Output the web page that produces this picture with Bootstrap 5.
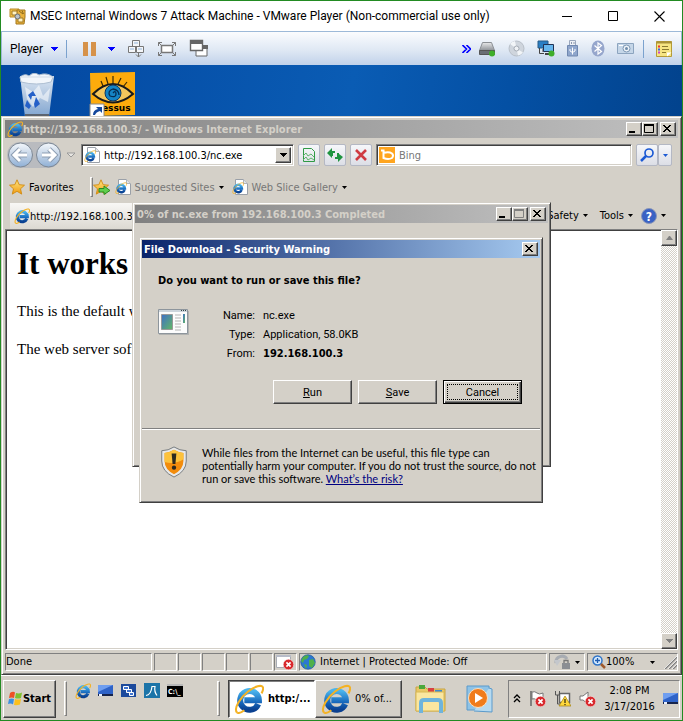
<!DOCTYPE html>
<html lang="en">
<head>
<meta charset="utf-8">
<meta name="viewport" content="width=device-width, initial-scale=1">
<title>MSEC Internal Windows 7 Attack Machine - VMware Player</title>
<link href="https://cdn.jsdelivr.net/npm/bootstrap@5.3.0/dist/css/bootstrap.min.css" rel="stylesheet">
<style>
:root{--face:#d4d0c8;--ui:"DejaVu Sans Condensed","DejaVu Sans",sans-serif;--host:Roboto,"Open Sans",sans-serif}
body{font:11px/13px var(--ui);color:#000;background:#fff}
svg{display:block;flex:none}
button,input{font:inherit;color:inherit;padding:0;border:0;background:none;border-radius:0}
.vm{border:1px solid #228b22}
.vm-title{height:30px;font:12px/16px var(--host)}
.vm-title .cap{width:46px;height:28px}
.vm-bar{height:34px;font:12px/16px var(--host);border:1px solid #9db9d8;border-bottom:0;background:linear-gradient(#fbfcfe,#dfe8f4 55%,#c1d2ea)}
.vm-sep{width:1px;height:18px;background:#7ba2ce}
.gap12{gap:12px}
.gap6{gap:6px}
.desk{background:linear-gradient(100deg,#0347a0,#0a5cb4 45%,#0450a4 65%,#013b80);min-height:0}
.shelf{height:51px;overflow:hidden}
.raised{background:var(--face);border:1px solid;border-color:#d4d0c8 #404040 #404040 #d4d0c8;box-shadow:inset 1px 1px #fff,inset -1px -1px #808080}
.btn3d{background:var(--face);border:1px solid;border-color:#fff #404040 #404040 #fff;box-shadow:inset -1px -1px #808080}
.sunk{background:#fff;border:1px solid;border-color:#808080 #fff #fff #808080;box-shadow:inset 1px 1px #404040,inset -1px -1px #d4d0c8}
.ttl{height:18px;padding:0 2px;color:#d4d0c8;font-weight:bold;background:linear-gradient(90deg,#808080,#c0c0c0);white-space:nowrap}
.ttl.live{color:#fff;background:linear-gradient(90deg,#0a246a,#a6caf0)}
.wb{width:16px;height:14px}
.wb+.wb-x{margin-left:2px}
.ie{padding:3px}
.navrow{height:34px}
.addr{width:213px;height:22px;padding:2px}
.addr input,.find input{min-width:0;outline:0}
.find{height:22px;padding:2px}
.find input::placeholder{color:#777;opacity:1}
.sq{width:22px;height:22px;border:1px solid #b4b8c4;border-radius:2px;background:linear-gradient(#f6f7fa,#dcdee6)}
.sq.slim{width:14px;margin-right:6px}
.favrow{height:30px}
.muted{color:#777}
.tabrow{height:27px}
.tab1{height:26px;background:linear-gradient(#f8f7f5,#dcd9d2);padding:0 4px;margin-left:5px}
.doc{min-height:0}
.page{font:15px/18px "Liberation Serif",serif;padding:16px 11px}
.page h1{font:bold 31px/36px "Liberation Serif",serif;margin:0 0 20px}
.page p{margin:0 0 20px}
.track{width:16px;background:repeating-conic-gradient(#fff 0 25%,#d4d0c8 0 50%) 0 0/2px 2px}
.track button{width:16px;height:16px}
.status{height:18px;margin-top:3px;gap:2px}
.pane{border:1px solid;border-color:#808080 #fff #fff #808080;height:18px;line-height:16px;white-space:nowrap}
.slots{gap:1px}
.slots .pane{width:23px}
.pane-done{width:147px}
.pane-zoom{width:91px}
.dl{left:131px;top:137px;width:419px;height:265px;padding:2px}
.fd{left:138px;top:172px;width:404px;height:266px;padding:2px}
.fd .lab{width:57px;text-align:right}
.fd dl,.fd dd,.fd dt{margin:0;font-weight:normal}
.fd dl>div{height:19px;display:flex;gap:8px}
.fd dd b{font-family:var(--ui)}
.facts{padding-top:6px}
.acts{margin-top:14px;padding-right:18px}
.push{width:79px;height:24px}
.push.def{border-color:#000;box-shadow:inset 1px 1px #fff,inset -1px -1px #404040,inset -2px -2px #808080;padding:3px}
.push.def span{border:1px dotted #000;height:100%;display:flex;align-items:center;justify-content:center}
.groove{border-top:1px solid #808080;border-bottom:1px solid #fff}
.dlgtxt{font:11px/13px Roboto,"Liberation Sans",sans-serif}
.warn{white-space:nowrap;font:11px/13px Lato,Roboto,sans-serif}
.warn a{color:#000080}
.bar{height:45px;background:var(--face);border-top:1px solid #fff;padding:3px 2px 2px}
.grip{width:3px;height:35px;border:1px solid;border-color:#fff #808080 #808080 #fff}
.grip.short{height:20px}
.quick{gap:7px;padding-top:4px}
.task{width:87px;height:38px;padding:0 5px}
.task.on{background:#fff;border-color:#404040 #fff #fff #404040;box-shadow:inset 1px 1px #808080;font-weight:bold}
.start{width:53px;height:38px;font-weight:bold}
.tray{width:172px;height:38px;border:1px solid;border-color:#808080 #fff #fff #808080}
.clock{line-height:16px;width:54px;text-align:center}
</style>
<script src="https://cdn.jsdelivr.net/npm/bootstrap@5.3.0/dist/js/bootstrap.bundle.min.js"></script>
</head>
<body>
<svg width="0" height="0" class="position-absolute" aria-hidden="true">
<defs>
<linearGradient id="gb" x2="0" y2="1"><stop stop-color="#4ab4ec"/><stop offset=".6" stop-color="#1768bc"/><stop offset="1" stop-color="#0a4090"/></linearGradient>
<linearGradient id="gs" x2="0" y2="1"><stop stop-color="#ffe680"/><stop offset="1" stop-color="#f09a10"/></linearGradient>
<linearGradient id="gm" x2="0" y2="1"><stop stop-color="#e8e9ea"/><stop offset="1" stop-color="#8c9096"/></linearGradient>
<linearGradient id="gn" x2="0" y2="1"><stop stop-color="#f4f8fc"/><stop offset=".5" stop-color="#c3d3e6"/><stop offset="1" stop-color="#8fb0d6"/></linearGradient>
<linearGradient id="gg" x2="1" y2="1"><stop stop-color="#3f6fc8"/><stop offset="1" stop-color="#63b863"/></linearGradient>
</defs>
<symbol id="ielogo" viewBox="0 0 16 16"><path d="M12.900 10.700A5 5 0 1 1 13.300 8.700H5.500" fill="none" stroke="url(#gb)" stroke-width="3.200"/><path d="M1.600 15.200C-.4 13 3.600 7 7.500 4C11 1.200 15 0 15.500 2C15.700 3 15.200 4.100 14.700 5" fill="none" stroke="#f4b223" stroke-width="1.100"/><path d="M1.600 15.200C2.400 15.800 4.200 15 5.500 14" fill="none" stroke="#f4b223" stroke-width="1.100"/></symbol>
<symbol id="iepage" viewBox="0 0 16 16"><path d="M3.500.5h8l4 4v11h-12z" fill="#fff" stroke="#9aa0a8"/><path d="M11.500.5v4h4" fill="#e4e6ea" stroke="#b0b4ba"/><use href="#ielogo" x="0" y="3" width="12" height="12"/></symbol>
<symbol id="dn" viewBox="0 0 7 4"><path d="M0 0h7v1h-1v1h-1v1h-1v1h-1v-1h-1v-1h-1v-1h-1z" fill="currentColor"/></symbol>
<symbol id="dn5" viewBox="0 0 5 3"><path d="M0 0h5L2.500 3z" fill="currentColor"/></symbol>
<symbol id="wmin" viewBox="0 0 12 10"><path d="M2 7h6v2H2z" fill="currentColor"/></symbol>
<symbol id="wmax" viewBox="0 0 12 10"><path d="M1.500 1v7.500h9V1" fill="none" stroke="currentColor"/><path d="M1 0h10v2H1z" fill="currentColor"/></symbol>
<symbol id="wx" viewBox="0 0 12 10"><path d="M2 1l7 7M9 1l-7 7M3 1l7 7M10 1l-7 7" stroke="currentColor"/></symbol>
<symbol id="star" viewBox="0 0 16 16"><path d="M8 .8l2.200 4.900 5.300.5-4 3.600 1.200 5.300L8 12.300l-4.700 2.800 1.200-5.300-4-3.600 5.300-.5z" fill="url(#gs)" stroke="#d08a10" stroke-width=".9"/></symbol>
<symbol id="redx" viewBox="0 0 9 9"><circle cx="4.500" cy="4.500" r="4.300" fill="#d8282c" stroke="#fff" stroke-width=".4"/><path d="M2.800 2.800l3.400 3.400M6.200 2.800L2.800 6.200" stroke="#fff" stroke-width="1.400"/></symbol>
<symbol id="deskic" viewBox="0 0 16 14"><path d="M0 1h15v10H0z" fill="#2f63c8"/><path d="M0 1h15L0 8z" fill="#6f9ef0"/><path d="M0 10h15v2H0z" fill="#17244c"/><path d="M1 10h3v2H1z" fill="#e8f0ff"/></symbol>
</svg>

<div class="vm d-flex flex-column min-vh-100">
  <header class="vm-title d-flex align-items-center">
    <svg class="ms-2 me-1" width="17" height="17" viewBox="0 0 17 17"><path d="M1 1h9v8H1z" fill="#f3c14b" stroke="#b98a28"/><path d="M8 2h8v7l-1 7H7V9z" fill="#e9b23d" stroke="#a4791f"/><path d="M3 3h5v4H3zM9 10h5v4H9z" fill="#fff3c4" stroke="#a27820"/><circle cx="8.500" cy="8.500" r="2.500" fill="#bcc3c8" stroke="#6e747a"/><path d="M10 3l4 3M13 2.500L14.500 6" stroke="#8c6a1c"/></svg>
    <span class="flex-grow-1 text-nowrap overflow-hidden">MSEC Internal Windows 7 Attack Machine - VMware Player (Non-commercial use only)</span>
    <button class="cap d-flex align-items-center justify-content-center" aria-label="Minimize"><svg width="10" height="10"><path d="M0 5.500h10" stroke="#000"/></svg></button>
    <button class="cap d-flex align-items-center justify-content-center" aria-label="Maximize"><svg width="10" height="10"><path d="M.5.5h9v9h-9z" fill="none" stroke="#000"/></svg></button>
    <button class="cap d-flex align-items-center justify-content-center" aria-label="Close"><svg width="11" height="11"><path d="M.5.5l10 10M10.500.5l-10 10" stroke="#000" stroke-width="1.100"/></svg></button>
  </header>

  <nav class="vm-bar d-flex align-items-center px-2">
    <button class="d-flex align-items-center gap-2">Player <svg width="7" height="4" color="#00f"><use href="#dn"/></svg></button>
    <i class="vm-sep ms-2 me-3"></i>
    <button class="d-flex align-items-center gap12" aria-label="Suspend"><svg width="13" height="14"><path d="M0 0h5v14H0zM8 0h5v14H8z" fill="#d6924a"/></svg><svg width="7" height="4" color="#00f"><use href="#dn"/></svg></button>
    <div class="d-flex align-items-center gap12 ms-2 ps-1">
      <button aria-label="Send keys"><svg width="18" height="19" viewBox="0 0 18 19" fill="#f4f6f9" stroke="#777"><path d="M5.500 1.500h7v6h-7zM1.500 7.500h7v6h-7zM9.500 7.500h7v6h-7z"/><path d="M11.500 13v5M9 15.500l2.500 2.500 2.500-2.500" fill="none"/><path d="M7 4h4M3 10h4M11 10h4" stroke="#8fb3d8"/></svg></button>
      <button aria-label="Full screen"><svg width="20" height="16" viewBox="0 0 20 16" fill="none" stroke="#777"><path d="M4.500 4.500h11v7h-11z" fill="#fff" stroke-width="1.500"/><path d="M1.500 5V1.500H5M15 1.500h3.500V5M18.500 11v3.500H15M5 14.500H1.500V11M1.500 1.500l3 3M18.500 1.500l-3 3M18.500 14.500l-3-3M1.500 14.500l3-3"/></svg></button>
      <button aria-label="Unity"><svg width="20" height="19" viewBox="0 0 20 19"><path d="M7 7h11v10H7z" fill="#fff" stroke="#666"/><path d="M14 6h5v4h-5z" fill="#666"/><path d="M1.500 1.500h12v10h-12z" fill="#fff" stroke="#666" stroke-width="1.400"/><path d="M1 1h13v4H1z" fill="#666"/></svg></button>
    </div>
    <div class="d-flex align-items-center ms-auto gap-2">
      <button aria-label="More"><svg width="9" height="8" fill="none" stroke="#00f" stroke-width="1.600"><path d="M.5 0l4 4-4 4M4.500 0l4 4-4 4"/></svg></button>
      <button class="me-1" aria-label="Hard disk"><svg width="17" height="16"><path d="M3.500 1.500h9l3 8H.5z" fill="url(#gm)" stroke="#8b8f94"/><path d="M.5 9.500h15v4H.5z" fill="#6a6e74" stroke="#555"/><circle cx="13" cy="12.500" r="3" fill="#3fae2a"/></svg></button>
      <button class="me-1" aria-label="CD"><svg width="17" height="17"><circle cx="8.500" cy="8.500" r="7.500" fill="#cfd5dd" stroke="#b8bfc8"/><path d="M8.500 8.500L2 4a8 8 0 0 1 5-3zM8.500 8.500l6.500 4a8 8 0 0 1-5 3z" fill="#f2f5f8"/><circle cx="8.500" cy="8.500" r="2.500" fill="#eef1f5" stroke="#a4abb4"/></svg></button>
      <button class="me-1" aria-label="Network"><svg width="18" height="17"><path d="M1 1h10v7H1z" fill="#2a7fc4" stroke="#275a86"/><path d="M2.500 8v5.500H7M6 9v3" stroke="#444" fill="none"/><path d="M6.500 4.500h10v7h-10z" fill="#66b6ee" stroke="#235"/><path d="M8 14h7" stroke="#444" stroke-width="2"/><circle cx="14.500" cy="13.500" r="3" fill="#3fae2a"/></svg></button>
      <button class="me-1" aria-label="USB"><svg width="12" height="17"><path d="M2.500.5h6v5h-6z" fill="#eef1f6" stroke="#9aa7bd"/><path d="M4 2h1v2H4zM6.500 2h1v2h-1z" fill="#8a97ad"/><path d="M.5 5.500h10v10.500H.5z" fill="#8fa6cc" stroke="#7088b0"/><path d="M5.500 7.500v7M3 9v2l2.500 1.500L8 11V9" stroke="#fff" fill="none"/></svg></button>
      <button class="me-1" aria-label="Bluetooth"><svg width="14" height="17"><ellipse cx="7" cy="8.500" rx="6.500" ry="8" fill="#96a6cc"/><path d="M3.500 5.500l7 6L7 14V3l3.500 2.500-7 6" stroke="#fff" fill="none" stroke-width="1.200"/></svg></button>
      <button aria-label="Camera"><svg width="18" height="13"><path d="M.5 1.500h16v10H.5z" fill="#c5d6e8" stroke="#8ca4bf"/><path d="M2 3.500h4" stroke="#fff"/><circle cx="9.500" cy="6.500" r="3.500" fill="#eef3f8" stroke="#7e98b5"/><circle cx="9.500" cy="6.500" r="1.500" fill="#6f8dac"/></svg></button>
      <i class="vm-sep me-1"></i>
      <button aria-label="Messages"><svg width="17" height="16"><path d="M.5.5h15v15H.5z" fill="#f6e583" stroke="#b59b36"/><path d="M.5.500h15v2H.5z" fill="#a99238"/><path d="M6 5.500h6M6 8.500h7M6 11.500h4" stroke="#8a7a30"/><path d="M2 4.500h2v2H2z" fill="#e33"/><path d="M2 7.500h2v2H2z" fill="#36e"/><path d="M2 10.500h2v2H2z" fill="#c4c"/><path d="M11 15.500v-4h4.500z" fill="#fff"/></svg></button>
    </div>
  </nav>

  <main class="desk position-relative flex-grow-1 d-flex flex-column">
    <div class="shelf d-flex ps-3">
      <svg class="mt-2" width="40" height="44" viewBox="0 0 40 44"><path d="M3 3h34l-5 41H8z" fill="url(#gn)" opacity=".9"/><path d="M3 4q5-4 9-1 5-5 10-1 8-3 14 2l-2 5q-14 4-30 0z" fill="#f2f6fb" stroke="#aebfd2"/><path d="M8 14l8 5 6-7 4 11 7-8-2 14-8-4-7 9-6-8z" fill="#fff" opacity=".55"/><path d="M11 22l5-4 3 5h-4l-1 4zM19 24l4 7-5 4-1-4zM10 27l4 6-2 3-4-3z" fill="#2560c8"/><path d="M3 4h34" stroke="#cfd9e6"/><path d="M8 41h24v3H8z" fill="#5c6470"/></svg>
      <svg class="mt-1 ms-3" width="64" height="48" viewBox="0 0 64 48"><path d="M17 4l45-1v43l-44 1z" fill="#fdab0c"/><path d="M30 17l-2-5M35 15l-2-7M40 14V7M45 15l3-6M50 18l4-5" stroke="#3c2a06" stroke-width="1.200"/><path d="M20 25q20-20 40 0-20 17-40 0z" fill="#f5c65c" stroke="#1a1a1a" stroke-width="2"/><circle cx="40" cy="24" r="8" fill="#1584c4" stroke="#0c3560"/><path d="M40 24q3-3 3 1t-6 2q-3-5 3-7 6 1 6 6" fill="none" stroke="#052c50" stroke-width="1.300"/><text x="29" y="42" font-family="DejaVu Sans" font-weight="bold" font-size="9">essus</text><path d="M17 35h14v13H17z" fill="#fff" stroke="#888"/><path d="M20 46q0-5 5-6l-2-2h6v6l-2-2q-4 1-5 4z" fill="#15489c"/></svg>
    </div>

    <section class="ie raised flex-grow-1 d-flex flex-column">
      <div class="ttl d-flex align-items-center">
        <svg width="16" height="16"><use href="#ielogo"/></svg><span class="flex-grow-1">http://192.168.100.3/ - Windows Internet Explorer</span>
        <button class="wb btn3d text-black" aria-label="Minimize"><svg width="12" height="10"><use href="#wmin"/></svg></button><button class="wb btn3d text-black" aria-label="Maximize"><svg width="12" height="10"><use href="#wmax"/></svg></button><button class="wb wb-x btn3d text-black" aria-label="Close"><svg width="12" height="10"><use href="#wx"/></svg></button>
      </div>
      <div class="navrow d-flex align-items-center">
        <svg width="76" height="30" viewBox="0 0 76 30"><rect x="2" y="2" width="54" height="26" rx="13" fill="#b9bbbf"/><g stroke="#7d8895"><circle cx="15.500" cy="15" r="12" fill="url(#gn)"/><circle cx="43.500" cy="15" r="12" fill="url(#gn)"/></g><g fill="none" stroke="#8c9db2" stroke-width="5"><path d="M22 15H10M15 9l-6 6 6 6"/><path d="M37 15h12M44 9l6 6-6 6"/></g><g fill="none" stroke="#fff" stroke-width="3"><path d="M22 15H10M15 9l-6 6 6 6"/><path d="M37 15h12M44 9l6 6-6 6"/></g><path d="M62 13h8l-4 4z" fill="#e8e6e2" stroke="#999"/></svg>
        <div class="addr sunk d-flex align-items-center"><svg width="16" height="16" class="me-1"><use href="#iepage"/></svg><input class="flex-grow-1" aria-label="Address" value="http://192.168.100.3/nc.exe"><button class="btn3d wb h-100 d-flex align-items-center justify-content-center" aria-label="Show addresses"><svg width="7" height="4"><use href="#dn"/></svg></button></div>
        <div class="d-flex gap-1 ms-1">
          <button class="sq" aria-label="Compatibility view"><svg width="20" height="20" fill="none" stroke="#2f9a45"><path d="M4.500 3.500h8l3 3v10h-11z"/><path d="M4 11l3-3 2 3 3-2 3 3M4 15l3-3 2 3 3-2 3 2" stroke="#5bb56b"/></svg></button>
          <button class="sq" aria-label="Refresh"><svg width="20" height="20" fill="#1f9440"><path d="M2 8l5-5v3h3v2H8v3H6V9.500H7V13zM18 12l-5 5v-3h-3v-2h2V8h2v1z"/></svg></button>
          <button class="sq" aria-label="Stop"><svg width="20" height="20"><path d="M5 5l10 10M15 5L5 15" stroke="#cf3a42" stroke-width="2.600"/></svg></button>
        </div>
        <label class="find sunk d-flex align-items-center flex-grow-1 ms-1"><svg width="16" height="16"><path d="M0 0h16v16H0z" fill="#ffa51f"/><path d="M2 3.500h2.500V11q5 2 8.500 0 2-2.500 0-4.500-3-2-8.500-.5" fill="none" stroke="#fff" stroke-width="2"/></svg><input class="flex-grow-1 ms-1" placeholder="Bing" aria-label="Search Bing"></label>
        <button class="sq ms-1" aria-label="Search"><svg width="20" height="20" fill="none" stroke="#1c5ad4"><circle cx="12" cy="8" r="4" stroke-width="1.700"/><path d="M9 11l-5 5" stroke-width="2.500"/></svg></button>
        <button class="sq slim d-flex align-items-center justify-content-center" aria-label="Search options"><svg width="5" height="3" color="#1c5ad4"><use href="#dn5"/></svg></button>
      </div>
      <div class="favrow d-flex align-items-center ps-1">
        <svg width="16" height="16" class="me-1"><use href="#star"/></svg><span>Favorites</span>
        <i class="grip short ms-3"></i>
        <svg width="18" height="16" class="me-1"><use href="#star" width="16" height="16"/><path d="M6 9.500h5V7l6 4.500-6 4V13H6z" fill="#5fce4c" stroke="#2a8a22"/></svg>
        <svg width="16" height="16" class="me-1"><use href="#iepage"/></svg><span class="muted">Suggested Sites</span><svg width="5" height="3" class="ms-1 me-2"><use href="#dn5"/></svg>
        <svg width="16" height="16" class="me-1"><use href="#iepage"/></svg><span class="muted">Web Slice Gallery</span><svg width="5" height="3" class="ms-1"><use href="#dn5"/></svg>
      </div>
      <div class="tabrow d-flex align-items-end">
        <div class="tab1 d-flex align-items-center"><svg width="16" height="16"><use href="#ielogo"/></svg><span>http://192.168.100.3/</span></div>
        <div class="ms-auto h-100 d-flex align-items-center gap-1 me-2 pe-1"><span>Safety</span><svg width="5" height="3" class="me-2"><use href="#dn5"/></svg><span>Tools</span><svg width="5" height="3" class="me-1"><use href="#dn5"/></svg><svg width="16" height="16"><circle cx="8" cy="8" r="7.500" fill="#3a62c4" stroke="#8a96b8"/><text x="8" y="12.500" text-anchor="middle" font-size="12" font-weight="bold" fill="#fff">?</text></svg><svg width="5" height="3"><use href="#dn5"/></svg></div>
      </div>
      <div class="doc sunk flex-grow-1 d-flex">
        <article class="page flex-grow-1"><h1>It works</h1><p>This is the default w</p><p>The web server sof</p></article>
        <div class="track d-flex flex-column justify-content-between">
          <button class="btn3d d-flex align-items-center justify-content-center" aria-label="Scroll up"><svg width="7" height="4" viewBox="0 0 7 4"><path d="M3 0h1l3 4H0z" fill="#808080"/></svg></button>
          <button class="btn3d d-flex align-items-center justify-content-center" aria-label="Scroll down"><svg width="7" height="4" color="#808080"><use href="#dn"/></svg></button>
        </div>
      </div>
      <footer class="status d-flex align-items-center">
        <div class="pane pane-done">Done</div>
        <div class="slots d-flex"><div class="pane"></div><div class="pane"></div><div class="pane"></div><div class="pane"></div><div class="pane"></div><div class="pane"><svg width="20" height="16"><path d="M1.500 1.500h14v12h-14z" fill="#fff" stroke="#a8acb4"/><path d="M1 1h15v2H1z" fill="#b8bcc8"/><use href="#redx" x="8" y="5" width="11" height="11"/></svg></div></div>
        <div class="pane flex-grow-1 d-flex align-items-center gap-1"><svg width="16" height="16"><circle cx="8" cy="8" r="7.300" fill="#2c78d0" stroke="#1b4d8c" stroke-width=".6"/><path d="M3 3q4-3 6-1l-2 3-3 1-1 3-2-2zM9 6l4-1 2 4-3 5-3-2zM4 10l3 1-1 4z" fill="#4fb04a"/></svg>Internet | Protected Mode: Off</div>
        <div class="pane d-flex align-items-center gap-1 px-1"><svg width="17" height="16"><path d="M2 9a6 6 0 0 1 11-4" fill="none" stroke="#a8acb2" stroke-width="3"/><path d="M0 6h7l-4 6z" fill="#c4c7cc"/><path d="M8 9h8v6H8z" fill="#8b8e93"/><path d="M10 9V6.500h4V9" fill="none" stroke="#777" stroke-width="1.300"/></svg><svg width="5" height="3"><use href="#dn5"/></svg></div>
        <div class="pane pane-zoom d-flex align-items-center ps-1"><svg width="14" height="14"><circle cx="5.500" cy="5.500" r="4.500" fill="#d8ecff" stroke="#2f74c8" stroke-width="1.500"/><path d="M3 5.500h5M5.500 3v5" stroke="#1f5cb0" stroke-width="1.300"/><path d="M9 9l4 4" stroke="#a05a2c" stroke-width="2.500"/></svg>100%<svg width="5" height="3" class="ms-3"><use href="#dn5"/></svg><svg width="13" height="14" class="ms-auto"><path d="M1 14L13 2M5 14l8-8M9 14l4-4" stroke="#808080" stroke-width="1.500"/><path d="M0 14L13 1M4 14l9-9M8 14l5-5" stroke="#fff" stroke-width=".7"/></svg></div>
      </footer>
    </section>

    <section class="dl raised position-absolute">
      <div class="ttl d-flex align-items-center"><span class="flex-grow-1">0% of nc.exe from 192.168.100.3 Completed</span>
        <button class="wb btn3d text-black" aria-label="Minimize"><svg width="12" height="10"><use href="#wmin"/></svg></button><button class="wb btn3d" disabled aria-label="Maximize"><svg width="12" height="10" color="#808080"><use href="#wmax"/></svg></button><button class="wb wb-x btn3d text-black" aria-label="Close"><svg width="12" height="10"><use href="#wx"/></svg></button></div>
    </section>

    <section class="fd raised position-absolute d-flex flex-column" role="dialog" aria-label="File Download">
      <div class="ttl live d-flex align-items-center"><span class="flex-grow-1">File Download - Security Warning</span><button class="wb btn3d text-black" aria-label="Close"><svg width="12" height="10"><use href="#wx"/></svg></button></div>
      <strong class="px-3 mt-3">Do you want to run or save this file?</strong>
      <div class="facts d-flex px-3 mt-3">
        <svg width="32" height="30" viewBox="0 0 32 30"><path d="M1 2h30v24H1z" fill="#8e9498" opacity=".5"/><path d="M.5.500h29v24H.5z" fill="#fcfcfc" stroke="#8d959c"/><path d="M1 1h28v2H1z" fill="#cdd5dc"/><path d="M23 1h1v1h-1zM25 1h1v1h-1zM27 1h1v1h-1z" fill="#344"/><path d="M3.500 5.500h11v15h-11z" fill="url(#gg)" stroke="#999"/><path d="M17 6h6M17 9h6M17 12h6M17 15h6M17 18h6M17 21h6" stroke="#b4b4b4"/><path d="M25 5h2v9h-2z" fill="url(#gg)"/></svg>
        <dl class="ms-2 dlgtxt"><div><dt class="lab">Name:</dt><dd>nc.exe</dd></div><div><dt class="lab">Type:</dt><dd>Application, 58.0KB</dd></div><div><dt class="lab">From:</dt><dd><b>192.168.100.3</b></dd></div></dl>
      </div>
      <div class="acts d-flex justify-content-end gap6 dlgtxt"><button class="push btn3d"><u>R</u>un</button><button class="push btn3d"><u>S</u>ave</button><button class="push def btn3d"><span>Cancel</span></button></div>
      <div class="groove mt-4"></div>
      <div class="warn d-flex gap12 px-3 mt-3">
        <svg width="32" height="32" viewBox="0 0 32 34"><path d="M16 1q6 4 13 4v11q0 11-13 17Q3 27 3 16V5q7 0 13-4z" fill="#e6e8ea" stroke="#72777c"/><path d="M16 4q5 3 10 3.500V16q0 9-10 14Q6 25 6 16V7.500Q11 7 16 4z" fill="#f28c0c"/><path d="M16 4q5 3 10 3.500V14q-9 6-20 3V7.500Q11 7 16 4z" fill="#fcc23c"/><path d="M13.500 8h5l-1 11h-3z" fill="#2c2a20"/><circle cx="16" cy="23" r="2.300" fill="#2c2a20"/></svg>
        <p class="mb-0">While files from the Internet can be useful, this file type can<br>potentially harm your computer. If you do not trust the source, do not<br>run or save this software. <a href="#">What’s the risk?</a></p>
      </div>
    </section>
  </main>

  <footer class="bar d-flex align-items-center">
    <button class="start btn3d d-flex align-items-center justify-content-center"><svg width="15" height="15" viewBox="0 0 15 15"><path d="M2 2q3-2 5-.5L6 7Q4 6 1 7z" fill="#ee5124"/><path d="M8 2q3 1 6-.5L13 7q-3 1-6 0z" fill="#7fc12e"/><path d="M1 8q3-1 5 0l-1 5.500Q3 12 0 13z" fill="#3c8fe0"/><path d="M7 8q3 1 6 0l-1 5.500q-3 1-6 .5z" fill="#fcc01c"/></svg>Start</button>
    <i class="grip ms-2 me-2"></i>
    <div class="quick d-flex align-self-start">
      <svg width="16" height="16"><use href="#ielogo"/></svg>
      <svg width="16" height="16"><use href="#deskic"/></svg>
      <svg width="16" height="16"><path d="M0 1h15v13H0z" fill="#1c4a9c"/><path d="M2.500 3.500h5v3h-5zM5.500 6.500h5v3h-5zM8.500 9.500h4v3h-4z" fill="#3f74d0" stroke="#fff"/></svg>
      <svg width="16" height="16"><path d="M0 0h16v15H0z" fill="#1c74a8"/><path d="M2 12.500Q7 12 8 3.500h3q-1 5 2 9" fill="none" stroke="#fff" stroke-width="1.200"/></svg>
      <svg width="16" height="16"><path d="M0 1h16v13H0z" fill="#000"/><path d="M0 1h16v2H0z" fill="#b8b8b8"/><text x="1" y="11" font-size="7" font-weight="bold" fill="#fff">C:\_</text></svg>
    </div>
    <i class="grip ms-auto me-2"></i>
    <button class="task on btn3d d-flex align-items-center gap-1"><svg width="30" height="30"><use href="#ielogo"/></svg>http:/...</button>
    <button class="task btn3d d-flex align-items-center gap-1"><svg width="30" height="30"><use href="#ielogo"/></svg>0% of...</button>
    <div class="d-flex align-items-center gap12 ps-2 me-2 pe-1 ms-1">
    <button aria-label="Explorer"><svg width="34" height="32" viewBox="0 0 34 32"><path d="M2 4h9l2 2h18v22H2z" fill="#e8c766" stroke="#c9a544"/><path d="M5 2h6v4H5z" fill="#4aa83c"/><path d="M14 5h6v4h-6z" fill="#d84040"/><path d="M21 7h7v3h-7z" fill="#3c8ad0"/><path d="M2 9h28v19H2z" fill="#fae6a0" stroke="#d8b854"/><path d="M7 30V20q0-3 3-3h14q3 0 3 3v10" fill="none" stroke="#6fb4dc" stroke-width="4"/></svg></button>
    <button class="ms-1" aria-label="Media Player"><svg width="32" height="30" viewBox="0 0 32 30"><path d="M3 2h22v24H3z" fill="#8fc3e6" stroke="#5a9acb"/><path d="M25 4l3 1v23l-18-1" fill="#b7daf0" stroke="#5a9acb"/><circle cx="14" cy="14" r="9.500" fill="#f07c1c" stroke="#fbe0c0"/><path d="M11 9l8 5-8 5z" fill="#fff"/></svg></button>
    </div>
    <div class="tray d-flex align-items-center gap-2 ps-1">
      <svg width="8" height="10" fill="none" stroke="#000" stroke-width="1.300"><path d="M1 4l3-3 3 3M1 8l3-3 3 3"/></svg>
      <svg width="17" height="17"><path d="M2 1v15" stroke="#666" stroke-width="1.500"/><path d="M3 2q3-1 5 1t6 0v7q-3 2-6 0T3 9z" fill="#fff" stroke="#777"/><use href="#redx" x="6" y="6" width="11" height="11"/></svg>
      <svg width="17" height="17"><path d="M5.500 3.500h10v9h-10z" fill="#fff" stroke="#666" stroke-width="1.500"/><path d="M1.500 1v4h4V1M3.500 5v9h3" fill="none" stroke="#555"/><path d="M11 6l6 10H5z" fill="#ffd83c" stroke="#a08010" stroke-width=".7"/><path d="M11 9v4M11 14v1.200" stroke="#000"/></svg>
      <svg width="17" height="17"><path d="M1 6h3l5-4v12l-5-4H1z" fill="#fff" stroke="#777"/><use href="#redx" x="6" y="6" width="11" height="11"/></svg>
      <div class="clock">2:08 PM<br>3/17/2016</div>
      <svg width="16" height="14"><use href="#deskic"/></svg>
    </div>
  </footer>
</div>
</body>
</html>
